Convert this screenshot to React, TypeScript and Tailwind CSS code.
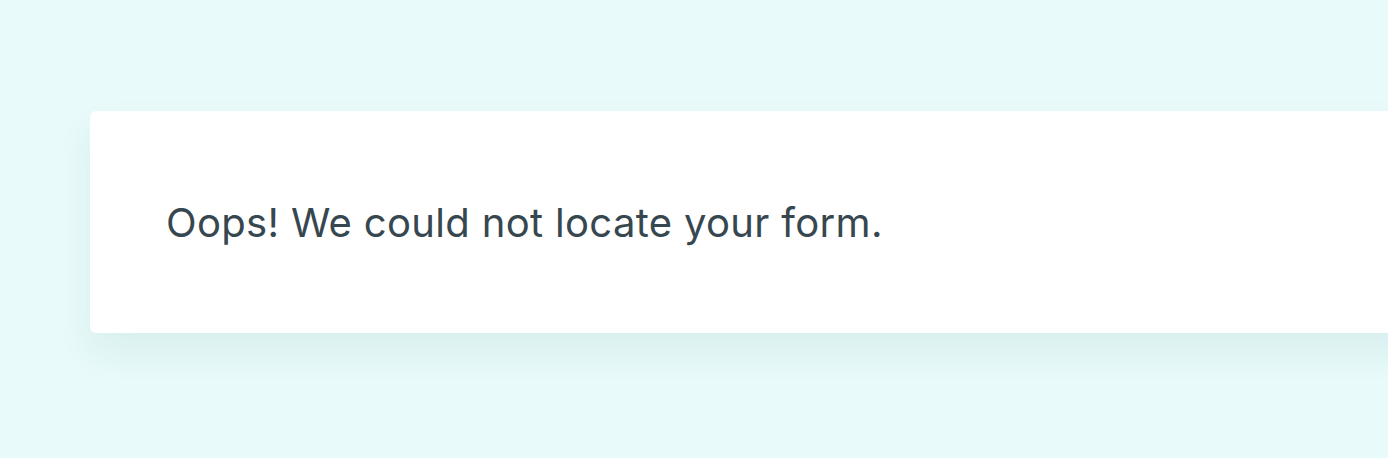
export default function App() {
  return (
    <div className="h-[458px] w-full overflow-hidden bg-[#e8fafa] pt-[111px] pl-[90px]">
      <div className="w-[1400px] h-[222px] bg-white rounded-md flex items-center pl-[76px] pt-[2px] shadow-[0_18px_36px_rgba(0,90,90,0.07)]">
        <p
          className="text-[#37474f] text-[40px] leading-none tracking-[0.33px]"
          style={{ fontFamily: 'Inter, "Liberation Sans", Arial, sans-serif' }}
        >
          Oops! We could not locate your form.
        </p>
      </div>
    </div>
  )
}
